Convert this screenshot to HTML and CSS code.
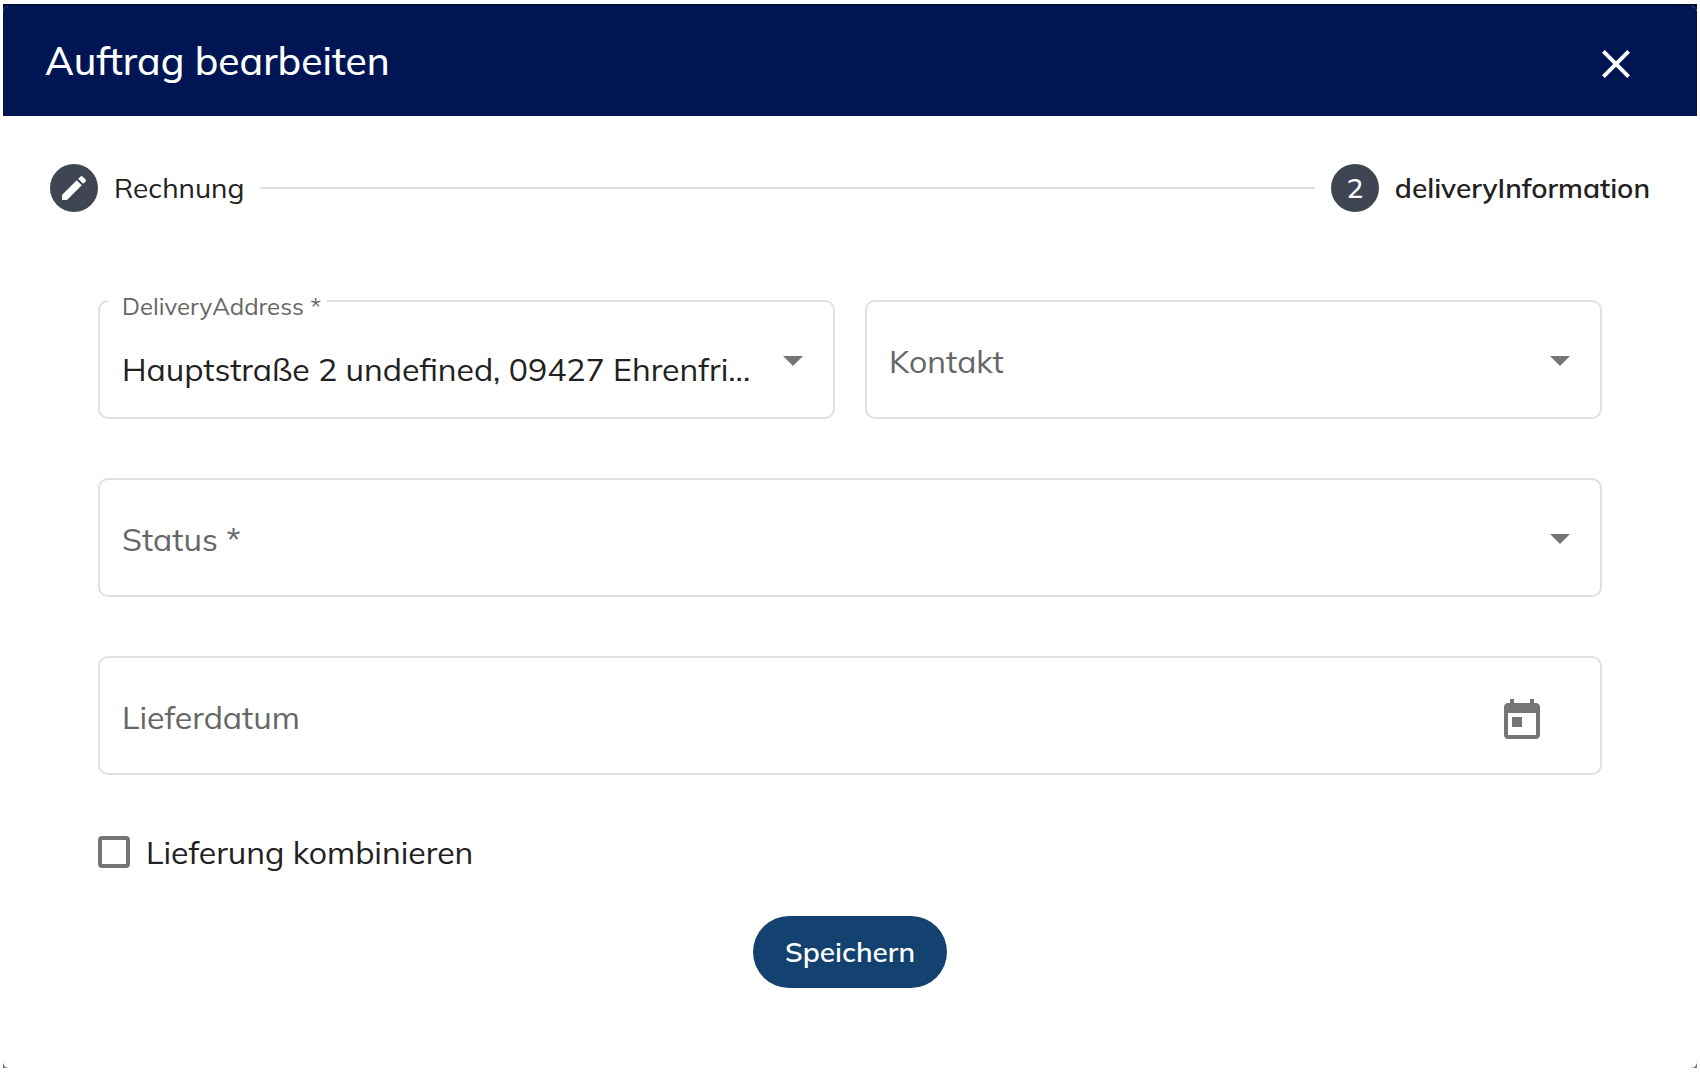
FILE: index.html
```html
<!DOCTYPE html>
<html lang="de">
<head>
<meta charset="utf-8">
<title>Auftrag bearbeiten</title>
<link rel="stylesheet" href="styles.css">
</head>
<body>
<div class="overlay">
<main class="dialog" role="dialog" aria-labelledby="dialog-title">
  <header class="dialog-header">
    <h1 class="dialog-title" id="dialog-title">Auftrag bearbeiten</h1>
    <button class="close-button" type="button" aria-label="Schließen">
      <svg width="28" height="28" viewBox="5 5 14 14" fill="#fff" aria-hidden="true"><path d="M19 6.41 17.59 5 12 10.59 6.41 5 5 6.41 10.59 12 5 17.59 6.41 19 12 13.41 17.59 19 19 17.59 13.41 12z"/></svg>
    </button>
  </header>
  <nav class="stepper">
    <div class="step">
      <span class="step-icon">
        <svg width="32" height="32" viewBox="0 0 24 24" fill="#fff" aria-hidden="true"><path d="M3 17.25V21h3.75L17.81 9.94l-3.75-3.75L3 17.25zM20.71 7.04a.996.996 0 0 0 0-1.41l-2.34-2.34a.996.996 0 0 0-1.41 0l-1.83 1.83 3.75 3.75 1.83-1.83z"/></svg>
      </span>
      <span>Rechnung</span>
    </div>
    <div class="step-line"></div>
    <div class="step step-active" aria-current="step">
      <span class="step-icon">2</span>
      <span>deliveryInformation</span>
    </div>
  </nav>
  <form class="form">
    <div class="fields">
      <div class="field field-filled">
        <select class="control" id="address" required>
          <option>Hauptstraße 2 undefined, 09427 Ehrenfri...</option>
        </select>
        <label class="floating-label" for="address">DeliveryAddress *</label>
        <svg class="arrow" width="20" height="10" viewBox="0 0 20 10" aria-hidden="true"><path d="M0 0h20L10 10z"/></svg>
      </div>
      <div class="field">
        <select class="control" id="contact"><option></option></select>
        <label class="label" for="contact">Kontakt</label>
        <svg class="arrow" width="20" height="10" viewBox="0 0 20 10" aria-hidden="true"><path d="M0 0h20L10 10z"/></svg>
      </div>
      <div class="field field-wide">
        <select class="control" id="status" required><option></option></select>
        <label class="label" for="status">Status *</label>
        <svg class="arrow" width="20" height="10" viewBox="0 0 20 10" aria-hidden="true"><path d="M0 0h20L10 10z"/></svg>
      </div>
      <div class="field field-wide">
        <input class="control" id="date" type="text">
        <label class="label" for="date">Lieferdatum</label>
        <button class="calendar-button" type="button" aria-label="Kalender öffnen">
          <svg width="36" height="40" viewBox="3 1 18 20" fill="#757575" aria-hidden="true"><path d="M19 3h-1V1h-2v2H8V1H6v2H5c-1.11 0-1.99.9-1.99 2L3 19c0 1.1.89 2 2 2h14c1.1 0 2-.9 2-2V5c0-1.100-.9-2-2-2zm0 16H5V8h14v11zM7 10h5v5H7z"/></svg>
        </button>
      </div>
    </div>
    <label class="check">
      <input class="checkbox" type="checkbox">
      <span>Lieferung kombinieren</span>
    </label>
    <button class="save-button" type="submit">Speichern</button>
  </form>
</main>
</div>
</body>
</html>
```
FILE: styles.css
```css
* { box-sizing: border-box; }

body {
  margin: 0;
  padding: 4px 3px;
  min-height: 100vh;
  display: flex;
  background: #fff;
  color: #212121;
  font-family: Mulish, Muli, Lato, sans-serif;
  font-size: 32px;
}

button, input, select { font: inherit; color: inherit; }

.overlay {
  flex: 1;
  min-width: 0;
  display: flex;
  padding-top: 2px;
  background: linear-gradient(#000f3a 112px, #757575 0);
}

.dialog {
  flex: 1;
  min-width: 0;
  border-radius: 6px;
  background: #fff;
}

.dialog-header {
  display: flex;
  align-items: center;
  justify-content: space-between;
  height: 110px;
  padding: 0 67px 0 42px;
  border-radius: 6px 6px 0 0;
  background: #001554;
  color: #fff;
}

.dialog-title {
  margin: 0;
  font-size: 39px;
  line-height: 56px;
  font-weight: 500;
}

.close-button {
  display: flex;
  padding: 6px 0 0;
  border: 0;
  background: none;
  cursor: pointer;
}

.stepper {
  display: flex;
  align-items: center;
  gap: 16px;
  padding: 48px 47px;
  font-size: 28px;
  line-height: 40px;
}

.step {
  display: flex;
  align-items: center;
  gap: 16px;
}

.step-active { font-weight: 600; }

.step-icon {
  display: flex;
  align-items: center;
  justify-content: center;
  width: 48px;
  height: 48px;
  border-radius: 50%;
  background: #404553;
  color: #fff;
  font-weight: 500;
}

.step-line {
  flex: 1;
  height: 2px;
  background: #e0e0e0;
}

.form {
  display: flex;
  flex-direction: column;
  padding: 40px 95px;
}

.fields {
  display: grid;
  grid-template-columns: 1fr 1fr;
  gap: 59px 30px;
}

.field {
  display: grid;
  grid-template: 119px / 1fr;
  align-items: center;
}

.field > * { grid-area: 1 / 1; }

.field-wide { grid-column: 1 / -1; }

.control {
  appearance: none;
  width: 100%;
  height: 100%;
  padding: 0 80px 0 22px;
  border: 2px solid #e0e0e0;
  border-radius: 10px;
  background: none;
  text-overflow: ellipsis;
}

.field-filled .control { padding-top: 18px; }

.label {
  padding: 2px 0 0 24px;
  line-height: 40px;
  color: #666;
  pointer-events: none;
}

.floating-label {
  align-self: start;
  justify-self: start;
  margin: -10px 0 0 10px;
  padding: 0 6px 0 14px;
  background: #fff;
  color: #666;
  font-size: 24px;
  line-height: 32px;
}

.arrow {
  justify-self: end;
  margin: 2px 32px 0 0;
  fill: #757575;
  pointer-events: none;
}

.calendar-button {
  display: flex;
  justify-self: end;
  margin: 6px 62px 0 0;
  padding: 0;
  border: 0;
  background: none;
  cursor: pointer;
}

.check {
  display: flex;
  align-items: center;
  align-self: flex-start;
  gap: 16px;
  margin-top: 57px;
  line-height: 40px;
}

.checkbox {
  appearance: none;
  width: 32px;
  height: 32px;
  margin: 0;
  border: 4px solid #757575;
  border-radius: 4px;
}

.checkbox:checked { background: #134170; }

.save-button {
  align-self: center;
  height: 72px;
  margin-top: 44px;
  padding: 0 32px 2px;
  border: 0;
  border-radius: 36px;
  background: #134170;
  color: #fff;
  font-size: 28px;
  font-weight: 600;
  cursor: pointer;
}
```
